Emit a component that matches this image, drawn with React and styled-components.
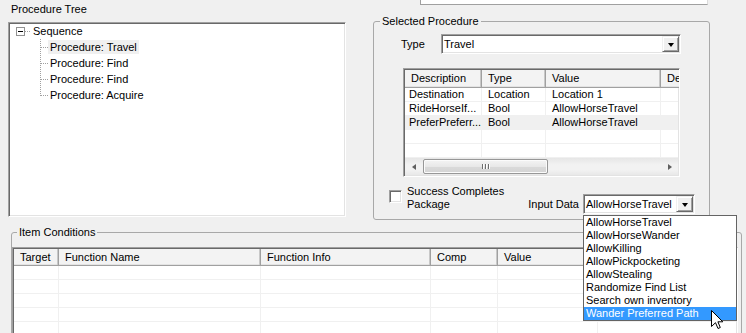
import React from "react";
import styled, { createGlobalStyle, css } from "styled-components";

const GlobalStyle = createGlobalStyle`
  html, body { margin: 0; padding: 0; background: #f0f0f0; }
  body { font-family: "Liberation Sans", Arial, sans-serif; font-size: 11px; color: #000; }
  *, *::before, *::after { box-sizing: border-box; }
`;

const sunken = css`
  border: 1px solid;
  border-color: #a0a0a0 #ffffff #ffffff #a0a0a0;
  padding: 1px;
  box-shadow: inset 1px 1px 0 #696969, inset -1px -1px 0 #e3e3e3;
  background: #ffffff;
`;

const Window = styled.div`
  position: relative;
  width: 746px;
  height: 333px;
  overflow: hidden;
  background: #f0f0f0;
  display: flex;
  flex-direction: column;
`;

const TopRow = styled.div`
  display: flex;
  flex: 0 0 226px;
  height: 226px;
`;

const LeftColumn = styled.div`
  margin-left: 8px;
  width: 338px;
  display: flex;
  flex-direction: column;
`;

const PanelTitle = styled.div`
  height: 22px;
  padding: 3px 0 0 3px;
  line-height: 13px;
`;

const TreeView = styled.div`
  ${sunken}
  height: 195px;
  padding: 0 1px 1px 1px;
`;

const TreeRow = styled.div`
  display: flex;
  align-items: center;
  height: 16px;
  padding-left: ${(p) => p.$indent}px;
`;

const Expander = styled.div`
  flex: 0 0 9px;
  width: 9px;
  height: 9px;
  border: 1px solid #919191;
  background: #fff;
  display: flex;
  align-items: center;
  justify-content: center;
  &::before {
    content: "";
    width: 5px;
    height: 1px;
    background: #000;
  }
`;

const dotsH = `repeating-linear-gradient(to right, #a0a0a0 0 1px, transparent 1px 2px)`;
const dotsV = `repeating-linear-gradient(to bottom, #a0a0a0 0 1px, transparent 1px 2px)`;

const RootDots = styled.div`
  flex: 0 0 6px;
  height: 100%;
  background: ${dotsH} left 8px / 100% 1px no-repeat;
`;

const Branch = styled.div`
  flex: 0 0 8px;
  height: 100%;
  background:
    ${dotsH} 1px 8px / 7px 1px no-repeat,
    ${dotsV} 0 0 / 1px ${(p) => (p.$last ? "9px" : "100%")} no-repeat;
`;

const TreeLabel = styled.span`
  padding: 0 2px;
  height: 14px;
  line-height: 14px;
  white-space: nowrap;
  background: ${(p) => (p.$selected ? "#f0f0f0" : "transparent")};
`;

const RightColumn = styled.div`
  margin-left: 27px;
  width: 337px;
  display: flex;
  flex-direction: column;
`;

const ClippedField = styled.div`
  margin-left: 47px;
  width: 288px;
  height: 5px;
  background: #fff;
  border: 1px solid;
  border-top: none;
  border-color: #a0a0a0 #dcdcdc #a0a0a0 #a0a0a0;
`;

const Group = styled.fieldset`
  margin: ${(p) => p.$margin || 0};
  min-width: 0;
  width: ${(p) => p.$w}px;
  height: ${(p) => p.$h}px;
  border: 1px solid #a8a8a8;
  border-radius: 3px;
  padding: ${(p) => p.$pad || 0};
  display: flex;
  flex-direction: column;
`;

const Legend = styled.legend`
  margin-left: ${(p) => p.$offset}px;
  padding: 0 2px;
  line-height: 13px;
`;

const TypeRow = styled.div`
  display: flex;
  align-items: center;
  padding-left: 27px;
  height: 20px;
`;

const FieldLabel = styled.div`
  flex: 0 0 auto;
  width: ${(p) => (p.$w ? `${p.$w}px` : "auto")};
  margin-right: ${(p) => p.$gap || 0}px;
  line-height: 13px;
  white-space: nowrap;
`;

const Combo = styled.div`
  ${sunken}
  width: ${(p) => p.$w}px;
  height: 20px;
  display: flex;
  align-items: stretch;
`;

const ComboText = styled.div`
  flex: 1;
  padding-left: 1px;
  line-height: 16px;
  white-space: nowrap;
  overflow: hidden;
`;

const ComboButton = styled.div`
  flex: 0 0 17px;
  background: #f0f0f0;
  border: 1px solid;
  border-color: #f0f0f0 #696969 #696969 #f0f0f0;
  box-shadow: inset 1px 1px 0 #ffffff, inset -1px -1px 0 #a0a0a0;
  display: flex;
  align-items: center;
  justify-content: center;
  &::before {
    content: "";
    border-left: 3.5px solid transparent;
    border-right: 3.5px solid transparent;
    border-top: 4px solid #000;
    margin-top: 1px;
  }
`;

const ListView = styled.div`
  ${sunken}
  width: ${(p) => p.$w}px;
  height: ${(p) => p.$h}px;
  margin: ${(p) => p.$margin || 0};
  display: flex;
  flex-direction: column;
  overflow: hidden;
`;

const HeaderRow = styled.div`
  display: flex;
  flex: 0 0 ${(p) => p.$h}px;
  background: #f0f0f0;
`;

const HeaderCell = styled.div`
  flex: 0 0 ${(p) => p.$w}px;
  display: flex;
  align-items: center;
  padding: 0 0 ${(p) => p.$lift || 0}px 6px;
  background: #f3f3f3;
  border-right: 1px solid #a0a0a0;
  border-bottom: 1px solid #a0a0a0;
  box-shadow: inset -1px 0 0 #c8c8c8, inset 0 -1px 0 #e3e3e3;
  white-space: nowrap;
  overflow: hidden;
`;

const Rows = styled.div`
  flex: 1;
  overflow: hidden;
`;

const Row = styled.div`
  display: flex;
  height: 14px;
  background: ${(p) => (p.$selected ? "#f0f0f0" : "#ffffff")};
`;

const Cell = styled.div`
  flex: 0 0 ${(p) => p.$w}px;
  padding-left: ${(p) => (p.$first ? 4 : 6)}px;
  line-height: 13px;
  border-right: 1px solid #f0f0f0;
  border-bottom: 1px solid #f0f0f0;
  white-space: nowrap;
  overflow: hidden;
`;

const ScrollBar = styled.div`
  flex: 0 0 17px;
  display: flex;
  background: linear-gradient(to bottom, #e6e6e6, #f2f2f2 40%, #f2f2f2 70%, #e8e8e8);
`;

const ScrollArrow = styled.div`
  flex: 0 0 17px;
  display: flex;
  align-items: center;
  justify-content: center;
  &::before {
    content: "";
    border-top: 3.5px solid transparent;
    border-bottom: 3.5px solid transparent;
    ${(p) =>
      p.$dir === "left"
        ? "border-right: 4px solid #606060;"
        : "border-left: 4px solid #606060;"}
  }
`;

const ScrollTrack = styled.div`
  flex: 1;
  display: flex;
  align-items: center;
  padding-left: 1px;
`;

const ScrollThumb = styled.div`
  width: ${(p) => p.$w}px;
  height: 15px;
  border: 1px solid #979797;
  border-radius: 2px;
  background: linear-gradient(to bottom, #f4f4f4, #e8e8e8 50%, #dadada 51%, #d4d4d4);
  box-shadow: inset 0 0 0 1px #fbfbfb;
  display: flex;
  align-items: center;
  justify-content: center;
  gap: 1px;
`;

const Grip = styled.span`
  width: 1px;
  height: 5px;
  background: #6e6e6e;
  box-shadow: 1px 0 0 #ffffff;
  margin-right: 1px;
`;

const BottomRow = styled.div`
  display: flex;
  align-items: flex-start;
  margin-top: 8px;
`;

const CheckBox = styled.div`
  ${sunken}
  flex: 0 0 13px;
  width: 13px;
  height: 13px;
  margin: 5px 5px 0 15px;
`;

const CheckText = styled.div`
  line-height: 13px;
`;

const InputGroup = styled.div`
  margin: 9px 14px 0 auto;
  display: flex;
  align-items: center;
`;

const ItemGroupWrap = styled.div`
  padding-left: 11px;
`;

const Popup = styled.div`
  position: absolute;
  left: 583px;
  top: 215px;
  width: 154px;
  height: 106px;
  border: 1px solid #646464;
  background: #ffffff;
  display: flex;
  flex-direction: column;
`;

const PopupItem = styled.div`
  height: 13px;
  line-height: 13px;
  padding-left: 2px;
  white-space: nowrap;
  background: ${(p) => (p.$active ? "#3399ff" : "transparent")};
  color: ${(p) => (p.$active ? "#ffffff" : "#000000")};
`;

const Cursor = styled.svg`
  position: absolute;
  left: 711px;
  top: 310px;
`;

const procCols = [
  { name: "Description", w: 77 },
  { name: "Type", w: 64 },
  { name: "Value", w: 115 },
  { name: "De", w: 60 },
];

const procRows = [
  ["Destination", "Location", "Location 1", ""],
  ["RideHorseIf...", "Bool", "AllowHorseTravel", ""],
  ["PreferPreferr...", "Bool", "AllowHorseTravel", ""],
  ["", "", "", ""],
  ["", "", "", ""],
];

const condCols = [
  { name: "Target", w: 45 },
  { name: "Function Name", w: 202 },
  { name: "Function Info", w: 170 },
  { name: "Comp", w: 67 },
  { name: "Value", w: 100 },
  { name: "Run On", w: 140 },
];

const popupItems = [
  "AllowHorseTravel",
  "AllowHorseWander",
  "AllowKilling",
  "AllowPickpocketing",
  "AllowStealing",
  "Randomize Find List",
  "Search own inventory",
  "Wander Preferred Path",
];

const treeChildren = [
  "Procedure: Travel",
  "Procedure: Find",
  "Procedure: Find",
  "Procedure: Acquire",
];

export default function App() {
  return (
    <>
      <GlobalStyle />
      <Window>
        <TopRow>
          <LeftColumn>
            <PanelTitle>Procedure Tree</PanelTitle>
            <TreeView>
              <TreeRow $indent={6}>
                <Expander />
                <RootDots />
                <TreeLabel>Sequence</TreeLabel>
              </TreeRow>
              {treeChildren.map((t, i) => (
                <TreeRow key={i} $indent={30}>
                  <Branch $last={i === treeChildren.length - 1} />
                  <TreeLabel $selected={i === 0}>{t}</TreeLabel>
                </TreeRow>
              ))}
            </TreeView>
          </LeftColumn>

          <RightColumn>
            <ClippedField />
            <Group $w={337} $h={205} $margin="10px 0 0 0" $pad="6px 0 0 0">
              <Legend $offset={6}>Selected Procedure</Legend>
              <TypeRow>
                <FieldLabel $w={40}>Type</FieldLabel>
                <Combo $w={240}>
                  <ComboText>Travel</ComboText>
                  <ComboButton />
                </Combo>
              </TypeRow>
              <ListView $w={277} $h={109} $margin="14px 0 0 29px">
                <HeaderRow $h={18}>
                  {procCols.map((c) => (
                    <HeaderCell key={c.name} $w={c.w} $lift={1}>
                      {c.name}
                    </HeaderCell>
                  ))}
                </HeaderRow>
                <Rows>
                  {procRows.map((r, i) => (
                    <Row key={i} $selected={i === 2}>
                      {r.map((v, j) => (
                        <Cell key={j} $w={procCols[j].w} $first={j === 0}>
                          {v}
                        </Cell>
                      ))}
                    </Row>
                  ))}
                </Rows>
                <ScrollBar>
                  <ScrollArrow $dir="left" />
                  <ScrollTrack>
                    <ScrollThumb $w={125}>
                      <Grip />
                      <Grip />
                      <Grip />
                    </ScrollThumb>
                  </ScrollTrack>
                  <ScrollArrow $dir="right" />
                </ScrollBar>
              </ListView>
              <BottomRow>
                <CheckBox />
                <CheckText>
                  Success Completes
                  <br />
                  Package
                </CheckText>
                <InputGroup>
                  <FieldLabel $gap={4}>Input Data</FieldLabel>
                  <Combo $w={112}>
                    <ComboText>AllowHorseTravel</ComboText>
                    <ComboButton />
                  </Combo>
                </InputGroup>
              </BottomRow>
            </Group>
          </RightColumn>
        </TopRow>

        <ItemGroupWrap>
          <Group $w={731} $h={130} $pad="8px 0 0 0">
            <Legend $offset={5}>Item Conditions</Legend>
            <ListView $w={726} $h={120}>
              <HeaderRow $h={17}>
                {condCols.map((c) => (
                  <HeaderCell key={c.name} $w={c.w}>
                    {c.name}
                  </HeaderCell>
                ))}
              </HeaderRow>
              <Rows>
                {[0, 1, 2, 3, 4, 5].map((i) => (
                  <Row key={i}>
                    {condCols.map((c, j) => (
                      <Cell key={j} $w={c.w} $first={j === 0} />
                    ))}
                  </Row>
                ))}
              </Rows>
            </ListView>
          </Group>
        </ItemGroupWrap>

        <Popup>
          {popupItems.map((t, i) => (
            <PopupItem key={t} $active={i === popupItems.length - 1}>
              {t}
            </PopupItem>
          ))}
        </Popup>

        <Cursor width="13" height="20" viewBox="0 0 13 20">
          <path
            d="M0.5 0.5 L0.5 16.5 L4.5 12.7 L7 18.5 L9.3 17.5 L6.9 11.8 L11.8 11.8 Z"
            fill="#ffffff"
            stroke="#000000"
            strokeWidth="1"
            strokeLinejoin="miter"
          />
        </Cursor>
      </Window>
    </>
  );
}
